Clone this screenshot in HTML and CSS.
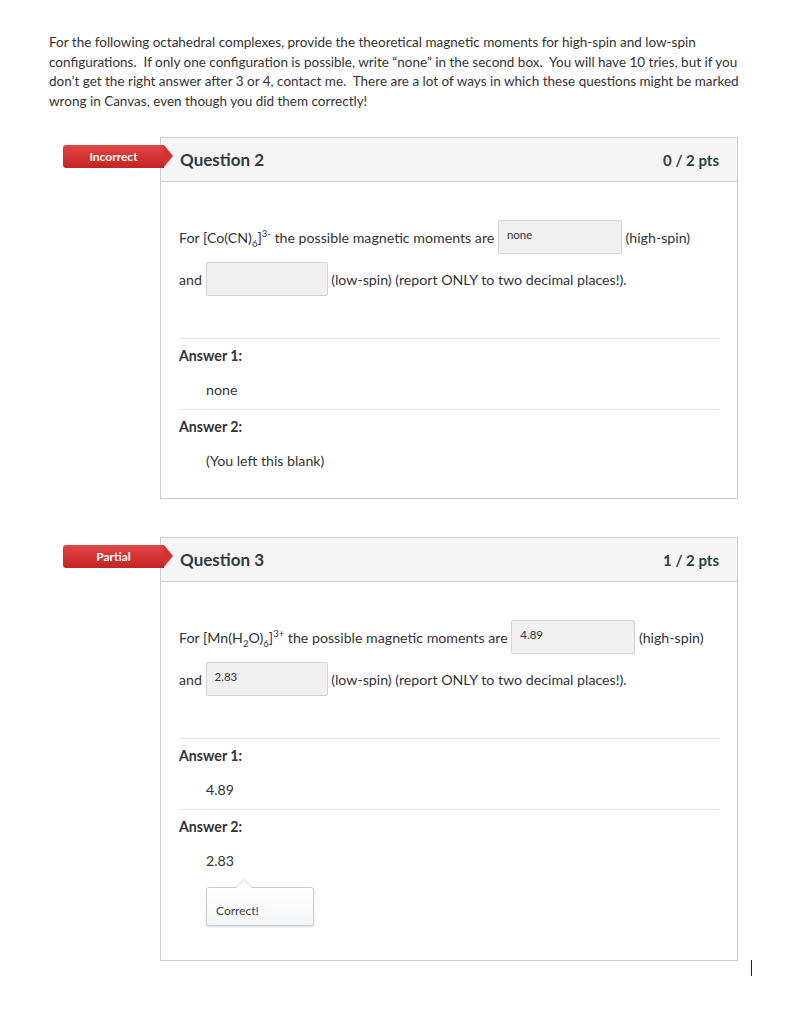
FILE: index.html
```html
<!DOCTYPE html>
<html lang="en">
<head>
    <meta charset="UTF-8">
    <title>Quiz Results</title>
    <link rel="stylesheet" href="styles.css">
</head>
<body>
    <div class="page">
        <p class="intro">For the following octahedral complexes, provide the theoretical magnetic moments for high-spin and low-spin configurations.&nbsp; If only one configuration is possible, write “none” in the second box.&nbsp; You will have 10 tries, but if you don’t get the right answer after 3 or 4, contact me.&nbsp; There are a lot of ways in which these questions might be marked wrong in Canvas, even though you did them correctly!</p>

        <div class="question">
            <div class="badge">Incorrect</div>
            <div class="question-header">
                <span class="question-title">Question 2</span>
                <span class="question-pts">0 / 2 pts</span>
            </div>
            <div class="question-body">
                <p class="question-text">For [Co(CN)<sub>6</sub>]<sup>3-</sup> the possible magnetic moments are <span class="blank wide">none</span> (high-spin)<br>and <span class="blank"></span> (low-spin) (report ONLY to two decimal places!).</p>
                <div class="answer">
                    <div class="answer-label">Answer 1:</div>
                    <div class="answer-value">none</div>
                </div>
                <div class="answer">
                    <div class="answer-label">Answer 2:</div>
                    <div class="answer-value">(You left this blank)</div>
                </div>
            </div>
        </div>

        <div class="question">
            <div class="badge">Partial</div>
            <div class="question-header">
                <span class="question-title">Question 3</span>
                <span class="question-pts">1 / 2 pts</span>
            </div>
            <div class="question-body">
                <p class="question-text">For [Mn(H<sub>2</sub>O)<sub>6</sub>]<sup>3+</sup> the possible magnetic moments are <span class="blank wide">4.89</span> (high-spin)<br>and <span class="blank">2.83</span> (low-spin) (report ONLY to two decimal places!).</p>
                <div class="answer">
                    <div class="answer-label">Answer 1:</div>
                    <div class="answer-value">4.89</div>
                </div>
                <div class="answer">
                    <div class="answer-label">Answer 2:</div>
                    <div class="answer-value">2.83</div>
                    <div class="feedback">Correct!</div>
                </div>
            </div>
            <div class="caret"></div>
        </div>
    </div>
</body>
</html>
```

FILE: styles.css
```css
body {
    margin: 0;
    background: white;
    font-family: Lato, "Open Sans", sans-serif;
    font-size: 14.2px;
    color: #333;
}
.page {
    padding: 33px 0 40px 49px;
    width: 700px;
}
.intro {
    margin: 0 0 26px;
    font-size: 13.5px;
    line-height: 19.5px;
}
.question {
    position: relative;
    margin-left: 111px;
    width: 576px;
    border: 1px solid #c7cdd1;
    margin-bottom: 38px;
}
.badge {
    position: absolute;
    left: -98px;
    top: 7px;
    width: 101px;
    height: 23px;
    line-height: 23px;
    text-align: center;
    color: white;
    font-size: 12px;
    font-weight: bold;
    background: linear-gradient(#e04545, #c42323);
    border-radius: 3px 0 0 3px;
}
.badge::after {
    content: "";
    position: absolute;
    right: -9px;
    top: 0;
    border-top: 11.5px solid transparent;
    border-bottom: 11.5px solid transparent;
    border-left: 9px solid #d23232;
}
.question-header {
    display: flex;
    justify-content: space-between;
    align-items: center;
    height: 43px;
    padding: 0 18px 0 19px;
    background: #f5f5f5;
    border-bottom: 1px solid #c7cdd1;
    color: #2d3b45;
    font-weight: bold;
}
.question-title {
    font-size: 17px;
}
.question-pts {
    font-size: 15px;
}
.question-body {
    padding: 35px 18px 18px 18px;
}
.question-text {
    margin: 0 0 37px;
    line-height: 42px;
}
.question-text sub,
.question-text sup {
    font-size: 9.5px;
    line-height: 0;
}
.blank {
    display: inline-block;
    vertical-align: middle;
    box-sizing: border-box;
    width: 122px;
    height: 34px;
    padding: 5px 8px 4px;
    background: #f0f0f0;
    border: 1px solid #d4d4d4;
    border-radius: 2px;
    font-size: 11.5px;
    line-height: 18px;
    margin-top: -5px;
}
.blank.wide {
    width: 124px;
}
.answer {
    border-top: 1px solid #e3e3e3;
    padding: 8px 0 10px;
}
.answer-label {
    font-weight: bold;
    line-height: 18px;
}
.answer-value {
    margin: 16px 0 0 27px;
    line-height: 18px;
}
.feedback {
    position: relative;
    margin: 17px 0 6px 27px;
    width: 108px;
    height: 39px;
    box-sizing: border-box;
    padding: 15px 0 0 9px;
    font-size: 12px;
    color: #444;
    border: 1px solid #c7cdd1;
    border-radius: 3px;
    background: linear-gradient(#fff, #f4f5f6);
    box-shadow: 0 1px 2px rgba(0,0,0,0.15);
}
.feedback::before,
.feedback::after {
    content: "";
    position: absolute;
    left: 29px;
    border-left: 8px solid transparent;
    border-right: 8px solid transparent;
}
.feedback::before {
    top: -9px;
    border-bottom: 8px solid #c7cdd1;
}
.feedback::after {
    top: -8px;
    border-bottom: 8px solid #fff;
}
.caret {
    position: absolute;
    right: -15px;
    top: 100%;
    width: 1px;
    height: 16px;
    background: #222;
}
```
